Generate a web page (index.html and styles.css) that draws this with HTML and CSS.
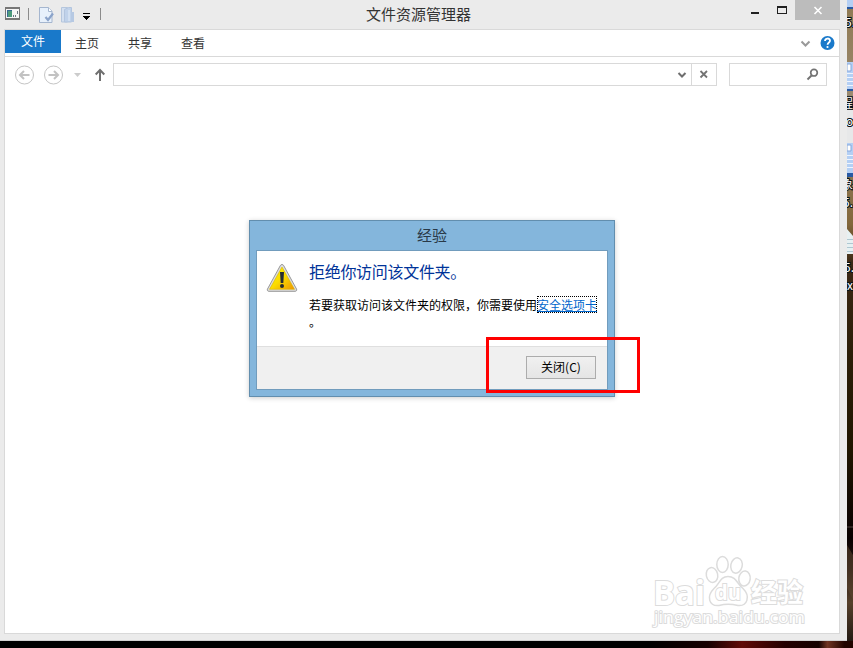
FILE: index.html
```html
<!DOCTYPE html>
<html lang="zh-CN">
<head>
<meta charset="utf-8">
<title>文件资源管理器</title>
<link rel="stylesheet" href="styles.css">
</head>
<body>
<main class="desktop">
  <section class="window">
    <header class="titlebar">
      <div class="quick">
        <svg width="105" height="29" viewBox="0 0 105 29">
          <g shape-rendering="crispEdges">
            <path d="M5 7h15v13H5z" fill="#777"/><path d="M6 9h13v9H6z" fill="#f7f7f7"/>
            <path d="M7 10h5v7H7z" fill="#386b91"/><path d="M8 11h4v6H8z" fill="#4e9c7d"/>
            <path d="M13 15h1v2h-1zM15 15h1v2h-1zM17 11h1v3h-1z" fill="#6b7883"/>
            <path d="M28 8h1v12h-1zM100 8h1v12h-1z" fill="#8b8b8b"/>
            <path d="M83 13h7v1h-7zM83 16h7v1h-1v1h-1v1h-1v1h-1v-1h-1v-1h-1v-1h-1z" fill="#000"/>
          </g>
          <path d="M39.500 7.500h9l3.500 3.500v11.500h-12.500z" fill="#e7f0fb" stroke="#a5b6cf"/>
          <path d="M48.500 7.500v4h3.500" fill="#fff" stroke="#a5b6cf"/>
          <path d="M45.500 17l2.500 3 5-6.500" fill="none" stroke="#8ba3ca" stroke-width="2.200"/>
          <path d="M61.500 7.500h6v14.500h-6z" fill="#d4e0f0" stroke="#b5c6dd"/>
          <path d="M64.500 9.500l4-2h3v14.500h-7z" fill="#c0d2ea" stroke="#b3c5de"/>
          <path d="M69 10v11" stroke="#e3edf8"/><path d="M71 12h3v10h-3z" fill="#b6c9e3"/>
        </svg>
      </div>
      <h1 class="title">文件资源管理器</h1>
      <div class="controls">
        <svg width="52" height="20" viewBox="0 0 52 20" shape-rendering="crispEdges"><path d="M8 12h8v2H8z" fill="#202020"/><path d="M34 6h10v8H34zM35 8v5h8V8z" fill="#202020" fill-rule="evenodd"/></svg>
        <span class="close"><svg width="45" height="20" viewBox="0 0 45 20"><path d="M19.500 7l7 7M26.500 7l-7 7" stroke="#fff" stroke-width="1.600"/></svg></span>
      </div>
    </header>
    <div class="client">
      <nav class="ribbon">
        <span class="tab active">文件</span><span class="tab">主页</span><span class="tab">共享</span><span class="tab">查看</span>
        <svg class="help" width="40" height="26" viewBox="0 0 40 26">
          <path d="M3.500 11.500l4 4 4-4" fill="none" stroke="#999" stroke-width="2"/>
          <circle cx="29.500" cy="13" r="7" fill="#1979ca"/>
          <path d="M27 11c0-3.300 5-3.200 5-.3 0 1.800-2.400 1.800-2.400 4" fill="none" stroke="#fff" stroke-width="1.800"/><circle cx="29.500" cy="17" r="1.100" fill="#fff"/>
        </svg>
      </nav>
      <div class="address">
        <svg class="arrows" width="108" height="36" viewBox="0 0 108 36">
          <g fill="none" stroke="#c5c5c5"><circle cx="19.500" cy="18" r="9"/><circle cx="48.500" cy="18" r="9"/></g>
          <path d="M24.500 18h-9M19 14l-4 4 4 4M43.500 18h9M49 14l4 4-4 4" fill="none" stroke="#c2c2c2" stroke-width="2"/>
          <path d="M69 16h7l-3.500 4z" fill="#ccc"/>
          <path d="M95 24V13.500M90.700 17.500L95 13l4.300 4.500" fill="none" stroke="#6f6f6f" stroke-width="2"/>
        </svg>
        <div class="path">
          <svg width="18" height="21" viewBox="0 0 18 21"><path d="M5.500 9l3.500 3.500 3.500-3.500" fill="none" stroke="#6e6e6e" stroke-width="2"/></svg>
          <span class="clear"><svg width="24" height="21" viewBox="0 0 24 21"><path d="M8.500 7l6.500 6.500M15 7l-6.500 6.500" stroke="#737373" stroke-width="1.800"/></svg></span>
        </div>
        <div class="search"><svg width="20" height="21" viewBox="0 0 20 21"><circle cx="12" cy="8.700" r="3.300" fill="none" stroke="#737373" stroke-width="1.700"/><path d="M9.500 11.500l-4 4" stroke="#737373" stroke-width="2"/></svg></div>
      </div>
    </div>
  </section>

  <svg class="wallpaper" width="6" height="641" viewBox="0 0 6 641">
    <defs><linearGradient id="ground" x2="0" y2="1"><stop stop-color="#8f7951"/><stop offset=".16" stop-color="#9b8b72"/><stop offset=".35" stop-color="#83673b"/><stop offset=".41" stop-color="#3c2815"/><stop offset=".55" stop-color="#2c1e08"/><stop offset=".7" stop-color="#201600"/><stop offset=".84" stop-color="#080000"/><stop offset=".89" stop-color="#251712"/><stop offset=".94" stop-color="#56402b"/><stop offset="1" stop-color="#241a13"/></linearGradient></defs>
    <path d="M0 0h6v641H0z" fill="url(#ground)"/>
    <path d="M0 0h6v8H0zM0 62h6v28H0zM0 143h6v30H0z" fill="#b4cff4"/>
    <path d="M0 7h6v2H0zM0 89h6v2H0zM0 173h6v4H0z" fill="#2859a3"/>
    <path d="M0 73.500h6M0 77.500h6M0 81.500h6M0 85.500h6M0 155.500h6M0 159.500h6M0 163.500h6M0 167.500h6" stroke="#eff5ff"/>
    <path d="M0 64h4v7H0zM0 145h4v6H0z" fill="#fff" stroke="#85a7dc"/>
    <path d="M0 110h6v33H0z" fill="#e7e8e9"/>
    <path d="M0 229l6 7v18H0z" fill="#e7f0f2"/><path d="M0 239.500h6M0 243.500h6M0 247.500h6M0 251.500h6" stroke="#afc7d1"/>
    <path d="M0 545l6 10v45l-6-12z" fill="#624932" opacity=".5"/><path d="M0 527h6" stroke="#4c403d"/>
    <g class="icon-label"><text x="-2" y="27">5.</text><text x="-6" y="108">程</text><text x="-1" y="126">o</text><text x="-6" y="189">象</text><text x="-4" y="207">5.</text><text x="-3" y="272">5.</text><text x="0" y="290">x</text></g>
  </svg>
  <div class="floor"></div>

  <section class="dialog">
    <h2 class="dialog-title">经验</h2>
    <div class="dialog-body">
      <div class="message">
        <svg class="warning" width="32" height="30" viewBox="0 0 32 30">
          <defs><linearGradient id="amber" x2="1" y2="1"><stop stop-color="#fff400"/><stop offset=".5" stop-color="#fbdc00"/><stop offset="1" stop-color="#ed9600"/></linearGradient></defs>
          <path d="M16 1.500c1 0 1.400.6 1.800 1.300L30.500 26c.6 1.300 0 2.300-1.500 2.300H3c-1.500 0-2.100-1-1.500-2.300L14.200 2.800c.4-.7.800-1.300 1.800-1.300z" fill="#dedede" stroke="#989898"/>
          <path d="M16 4L28.500 26.300h-25z" fill="url(#amber)" stroke="#d7b300" stroke-width=".6"/>
          <path d="M14 9h4l-.7 11h-2.600z" fill="#262c33"/><circle cx="16" cy="23" r="2" fill="#272b2d"/>
        </svg>
        <div class="copy">
          <h3>拒绝你访问该文件夹。</h3>
          <p>若要获取访问该文件夹的权限，你需要使用<a>安全选项卡</a><br>。</p>
        </div>
      </div>
      <footer class="actions"><button>关闭(C)</button></footer>
    </div>
  </section>
  <div class="highlight"></div>

  <svg class="watermark" width="160" height="90" viewBox="0 0 160 90">
    <g class="mark">
      <text class="bai" x="1" y="63" textLength="52" lengthAdjust="spacingAndGlyphs">Bai</text>
      <ellipse cx="60" cy="33" rx="5.700" ry="7.500" transform="rotate(-12 60 33)"/><ellipse cx="70.500" cy="22.500" rx="5.700" ry="8"/><ellipse cx="84.500" cy="23.500" rx="5.700" ry="7.700" transform="rotate(12 84.500 23.500)"/><ellipse cx="92.500" cy="36.500" rx="5.700" ry="7.500" transform="rotate(8 92.500 36.500)"/>
      <path d="M76 34.500c8 0 9 7 15 12 8 8 4 18-5 17-8-2-12-2-19 0-10 1-13-9-5-17 6-5 6-12 14-12z"/>
      <text class="du" x="63" y="58" textLength="26" lengthAdjust="spacingAndGlyphs">du</text>
      <text class="exp" x="99" y="60" textLength="52" lengthAdjust="spacingAndGlyphs">经验</text>
      <text class="site" x="2" y="81" textLength="151" lengthAdjust="spacingAndGlyphs">jingyan.baidu.com</text>
    </g>
  </svg>
</main>
</body>
</html>
```
FILE: styles.css
```css
* { box-sizing: border-box; }
body { margin: 0; overflow: hidden; font-family: "Noto Sans CJK SC", sans-serif; }
h1, h2, h3, p { margin: 0; font-weight: 400; }
svg { display: block; flex: none; }
.desktop { position: relative; display: grid; grid-template: 641px 7px / 847px 6px; width: 853px; height: 648px; background: #000; }
.window { background: #ebebeb; padding: 0 7px 0 4px; border-bottom: 1px solid #d2d2d2; }
.titlebar { display: grid; grid-template-columns: 105px 1fr 97px; height: 29px; }
.quick { margin-left: -4px; }
.title { padding-right: 15px; text-align: center; font-size: 15px; line-height: 28px; color: #333; }
.controls { display: flex; }
.close { width: 45px; height: 20px; background: #bcbcbc; }
.client { height: 605px; background: #fff; border: 1px solid #d9d9d9; }
.ribbon { display: flex; height: 27px; border-bottom: 1px solid #d9d9d9; }
.tab { width: 53px; padding-right: 1px; text-align: center; font-size: 12px; line-height: 26px; color: #333; }
.tab.active { width: 56px; height: 23px; padding: 0; background: #1979ca; color: #fff; line-height: 22px; }
.help { margin-left: auto; margin-right: 1px; }
.address { display: flex; }
.path { display: flex; justify-content: flex-end; width: 604px; height: 23px; margin-top: 6px; border: 1px solid #d9d9d9; }
.clear { width: 25px; border-left: 1px solid #d9d9d9; }
.search { display: flex; justify-content: flex-end; width: 98px; height: 23px; margin: 6px 0 0 12px; padding-right: 4px; border: 1px solid #d9d9d9; }
.wallpaper { overflow: hidden; }
.icon-label { fill: #fff; stroke: #071117; stroke-width: 2px; paint-order: stroke; font: 12px "Noto Sans CJK SC", sans-serif; }
.floor { grid-column: 1 / 3; background: linear-gradient(90deg, #000 0 76%, #160000 83%, #610b08 87%, #240001 92%, #150200 96%, #703422 97%, #220500 99%); }
.dialog { position: absolute; left: 249px; top: 220px; width: 366px; height: 177px; padding: 0 6px; background: #84b6dc; border: 1px solid #628eae; box-shadow: 0 1px 5px #0003; }
.dialog-title { height: 29px; line-height: 28px; text-align: center; font-size: 15px; color: #293947; }
.dialog-body { height: 140px; background: #fff; border: 1px solid #719cbd; }
.message { display: flex; height: 95px; padding: 12px 0 0 9px; }
.copy { margin-left: 11px; white-space: nowrap; }
.copy h3 { color: #003399; font-size: 16px; line-height: 20px; margin-top: -2px; letter-spacing: -.3px; }
.copy p { font-size: 12px; line-height: 17px; margin-top: 15px; color: #000; }
.copy a { display: inline-block; height: 17px; color: #0066cc; text-decoration: underline; outline: 1px dotted #000; outline-offset: -1px; }
.actions { display: flex; justify-content: flex-end; height: 43px; padding: 9px 11px 0 0; background: #f0f0f0; border-top: 1px solid #dfdfdf; }
.actions button { width: 70px; height: 23px; padding: 0 0 2px; background: linear-gradient(#f0f0f0, #e5e5e5); border: 1px solid #acacac; font: 12px "Noto Sans CJK SC", sans-serif; color: #000; }
.highlight { position: absolute; left: 486px; top: 337px; width: 154px; height: 56px; border: 3px solid #f00; }
.watermark { position: absolute; left: 652px; top: 542px; overflow: visible; }
.mark { fill: #fff; stroke: #dcdcdc; stroke-width: 1.5px; font-family: "Open Sans", sans-serif; }
.mark text { paint-order: stroke; stroke-width: 2px; }
.bai { font-size: 34px; font-weight: 700; }
.du { font-size: 22px; font-weight: 700; }
.exp { font: 700 26px "Noto Sans CJK SC", sans-serif; }
.site { font-size: 17px; }
```
